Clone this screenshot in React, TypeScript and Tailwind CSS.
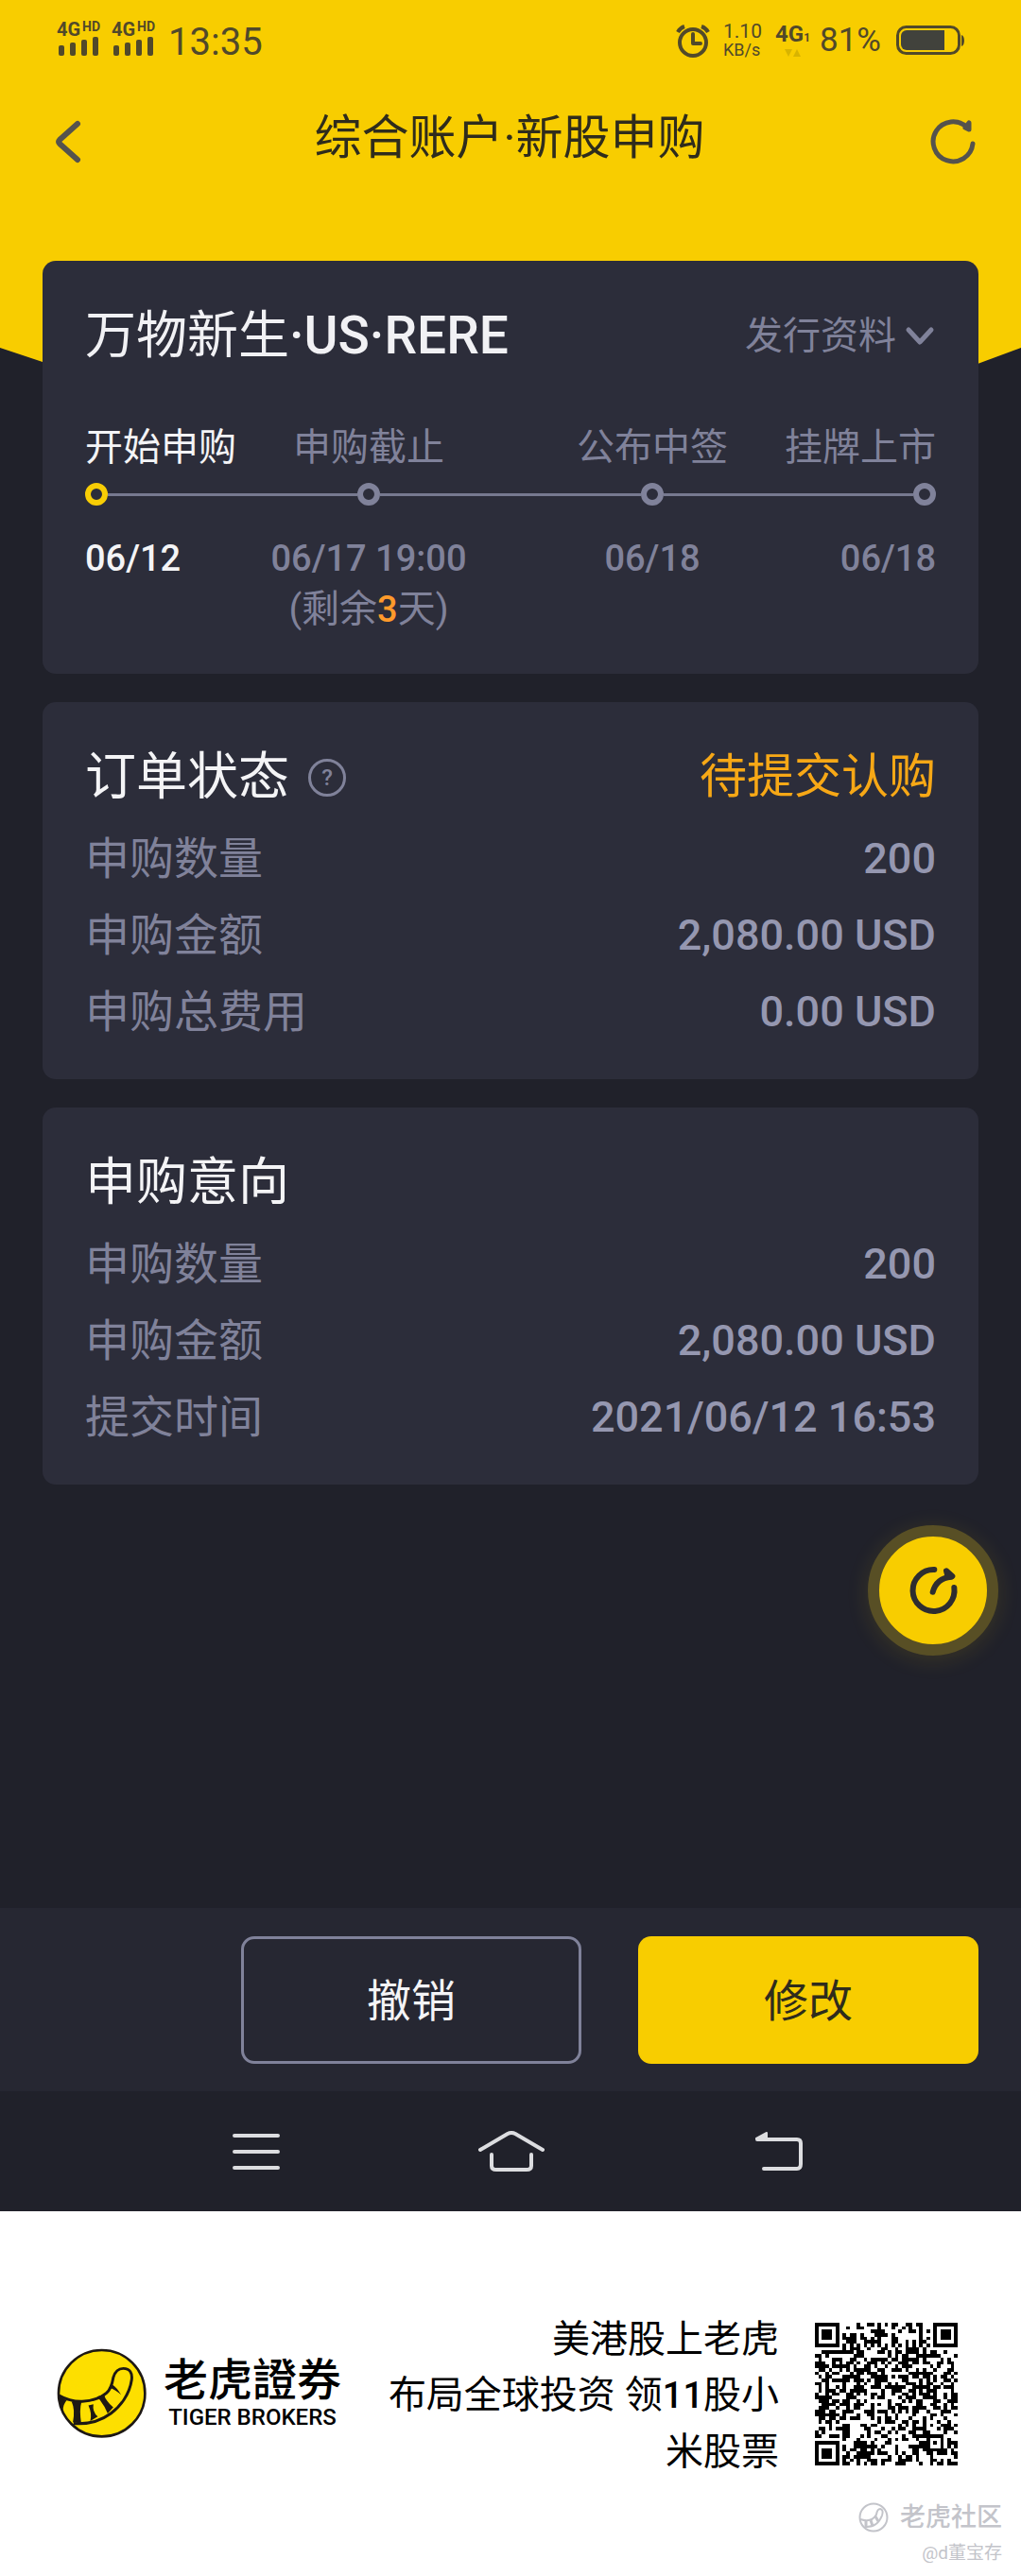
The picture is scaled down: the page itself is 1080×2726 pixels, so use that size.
import React from "react";

const QR_SIZE = 41;

function inFinder(x: number, y: number): boolean | null {
  const corners = [
    [0, 0],
    [QR_SIZE - 7, 0],
    [0, QR_SIZE - 7],
  ];
  for (const [cx, cy] of corners) {
    const dx = x - cx;
    const dy = y - cy;
    if (dx >= -1 && dx <= 7 && dy >= -1 && dy <= 7) {
      const r = Math.max(Math.abs(dx - 3), Math.abs(dy - 3));
      return r <= 1 || r === 3;
    }
  }
  const r = Math.max(Math.abs(x - 34), Math.abs(y - 34));
  if (r <= 2) return r !== 1;
  if (x === 6 || y === 6) return (x + y) % 2 === 0;
  return null;
}

function qrPath(): string {
  let seed = 20210612;
  let d = "";
  for (let y = 0; y < QR_SIZE; y++) {
    for (let x = 0; x < QR_SIZE; x++) {
      seed = (Math.imul(seed, 1664525) + 1013904223) >>> 0;
      const fixed = inFinder(x, y);
      const on = fixed === null ? seed / 4294967296 < 0.5 : fixed;
      if (on) d += `M${x} ${y}h1v1h-1z`;
    }
  }
  return d;
}

const QR_PATH = qrPath();

function Signal() {
  return (
    <div className="flex w-[46px] flex-col">
      <div className="flex items-start justify-between font-bold">
        <span className="text-[20px] leading-[16px]">4G</span>
        <span className="text-[14px] leading-[11px]">HD</span>
      </div>
      <svg className="ml-0.5" width="44" height="20" viewBox="0 0 44 20" fill="currentColor" aria-hidden="true">
        <rect x="0" y="9" width="6" height="11" rx="2" />
        <rect x="12" y="6" width="6" height="14" rx="2" />
        <rect x="24" y="3" width="6" height="17" rx="2" />
        <rect x="36" y="0" width="6" height="20" rx="2" />
      </svg>
    </div>
  );
}

function StatusBar() {
  return (
    <div className="flex h-[90px] items-center justify-between pr-[60px] pl-[60px] text-[#51492a]">
      <div className="flex items-center">
        <div className="flex gap-3 pb-2">
          <Signal />
          <Signal />
        </div>
        <span className="ml-[14px] text-[40px] leading-[48px]">13:35</span>
      </div>
      <div className="flex items-center pb-1">
        <svg width="36" height="36" viewBox="0 0 36 36" fill="none" stroke="currentColor" aria-hidden="true">
          <circle cx="18" cy="20" r="14" strokeWidth="4" />
          <path d="M18 11v10h8" strokeWidth="4" strokeLinecap="round" strokeLinejoin="round" />
          <path d="M2 9a12 12 0 0 1 7-6M34 9a12 12 0 0 0-7-6" strokeWidth="4" />
        </svg>
        <div className="ml-[14px] flex flex-col">
          <span className="text-[21px] leading-[20px]">1.10</span>
          <span className="text-[18px] leading-[20px]">KB/s</span>
        </div>
        <div className="ml-[14px] flex flex-col items-center">
          <span className="text-[24px] leading-[22px] font-bold">
            4G<span className="text-[12px]">1</span>
          </span>
          <svg width="18" height="10" viewBox="0 0 18 10" fill="#d8b400" aria-hidden="true">
            <path d="M0 1h8l-4 8zM9 9h8l-4-8z" />
          </svg>
        </div>
        <span className="ml-[10px] text-[35px] leading-[40px]">81%</span>
        <svg className="ml-4" width="72" height="32" viewBox="0 0 72 32" aria-hidden="true">
          <rect x="1.5" y="1.5" width="65" height="28" rx="9" fill="none" stroke="currentColor" strokeWidth="3" />
          <path d="M11 5h40v21H11a6 6 0 0 1-6-6v-9a6 6 0 0 1 6-6z" fill="#41423c" />
          <path d="M69 10q3 1 3 6t-3 6z" fill="currentColor" />
        </svg>
      </div>
    </div>
  );
}

function TitleBar() {
  return (
    <div className="flex h-[120px] items-center justify-between pr-[46px] pl-[56px]">
      <button type="button" aria-label="返回" className="w-[38px]">
        <svg width="32" height="48" viewBox="0 0 32 48" fill="none" stroke="#55534d" strokeWidth="6" strokeLinecap="round" strokeLinejoin="round">
          <path d="M26 5 7 22q-2 2 0 4L26 43" />
        </svg>
      </button>
      <h1 className="pb-2 text-[50px] leading-[60px] text-[#2f2c1c]">综合账户·新股申购</h1>
      <button type="button" aria-label="刷新">
        <svg width="50" height="50" viewBox="0 0 50 50" fill="none" stroke="#55534d" strokeWidth="5" strokeLinecap="round" strokeLinejoin="round">
          <path d="M45 27A21 21 0 1 1 39 10" />
          <path d="M41 5v7l-4-2z" />
        </svg>
      </button>
    </div>
  );
}

type Step = { label: string; date: string; active?: boolean; days?: number; align: string };

const STEPS: Step[] = [
  { label: "开始申购", date: "06/12", active: true, align: "items-start" },
  { label: "申购截止", date: "06/17 19:00", days: 3, align: "items-center" },
  { label: "公布中签", date: "06/18", align: "items-center" },
  { label: "挂牌上市", date: "06/18", align: "items-end" },
];

function Timeline() {
  return (
    <ol className="mt-[51px] grid grid-cols-[minmax(0,1fr)_minmax(0,2fr)_minmax(0,2fr)_minmax(0,1fr)] text-[#80829a]">
      {STEPS.map((s, i) => (
        <li key={s.label} className={`flex flex-col whitespace-nowrap ${s.align} ${s.active ? "text-[#f4f4f6]" : ""}`}>
          <span className="text-[40px] leading-[54px]">{s.label}</span>
          <div className="mt-[10px] flex w-full items-center">
            {i > 0 && <span className="h-[3px] flex-1 bg-[#77798f]" />}
            <span
              className={`size-6 rounded-full border-[6px] ${s.active ? "border-[#f8cd05]" : "border-[#80829a]"}`}
            />
            {i < STEPS.length - 1 && <span className="h-[3px] flex-1 bg-[#77798f]" />}
          </div>
          <span className="mt-[29px] text-[38px] leading-[54px] font-medium">{s.date}</span>
          {s.days && (
            <span className="text-[40px] leading-[54px]">
              (剩余<b className="text-[38px] font-medium text-[#ff9a2b]">{s.days}</b>天)
            </span>
          )}
        </li>
      ))}
    </ol>
  );
}

function Rows({ rows }: { rows: [string, string][] }) {
  return (
    <dl className="mt-[5px]">
      {rows.map(([k, v]) => (
        <div key={k} className="flex items-center justify-between leading-[81px]">
          <dt className="text-[47px] text-[#80829a]">{k}</dt>
          <dd className="text-[45px] font-medium text-[#9597b0]">{v}</dd>
        </div>
      ))}
    </dl>
  );
}

function NavBar() {
  return (
    <nav className="flex h-[127px] items-center justify-center gap-[210px] bg-[#20212a] pl-[14px]">
      <button type="button" aria-label="菜单">
        <svg width="50" height="44" viewBox="0 0 50 44" stroke="#dcdde0" strokeWidth="4" strokeLinecap="round">
          <path d="M2 5h46M2 22h46M2 39h46" />
        </svg>
      </button>
      <button type="button" aria-label="主页">
        <svg width="70" height="44" viewBox="0 0 70 44" fill="none" stroke="#dcdde0" strokeWidth="4" strokeLinecap="round" strokeLinejoin="round">
          <path d="M2 20 31 3q4-2 8 0l29 17M14 25v12q0 4 5 4h32q5 0 5-4V25" />
        </svg>
      </button>
      <button type="button" aria-label="后退" className="ml-3">
        <svg width="51" height="44" viewBox="0 0 51 44" fill="none" stroke="#dcdde0" strokeWidth="4" strokeLinecap="round" strokeLinejoin="round">
          <path d="M3 9h42q4 0 4 4v22q0 5-4 5H10" />
          <path d="M2 8 13 2v6z" fill="#dcdde0" strokeWidth="2" />
        </svg>
      </button>
    </nav>
  );
}

function TigerLogo() {
  return (
    <svg className="size-24 shrink-0" viewBox="58 132 292 292" aria-label="Tiger Brokers" role="img">
      <circle cx="203" cy="277" r="139" fill="#fddf00" stroke="#1d1814" strokeWidth="8" />
      <path
        d="M66 284Q100 304 140 303Q190 300 218 276Q234 262 240 226C246 206 256 197 272 197C294 197 302 212 299 234C292 282 262 320 232 342Q180 380 112 374"
        fill="none"
        stroke="#1d1814"
        strokeWidth="9"
      />
      <g fill="#1d1814">
        <path d="M64 284 90 300Q78 312 78 334Q66 312 64 284z" />
        <path d="M106 304H138Q130 330 137 374L110 370Q118 330 106 304z" />
        <path d="M188 288 210 280Q214 300 240 322L222 342Q210 312 188 288z" />
        <path d="M160 316 176 312Q172 336 190 352L166 366Q172 342 160 316z" />
        <path d="M226 258 236 248Q252 258 265 282Q246 264 226 258z" />
      </g>
    </svg>
  );
}

function Promo() {
  return (
    <footer className="bg-white pt-[102px] text-black">
      <div className="flex items-center justify-between pr-[67px] pl-[60px]">
        <div className="flex items-center gap-[17px]">
          <TigerLogo />
          <div className="flex flex-col items-center">
            <span className="text-[47px] leading-[50px] font-medium">老虎證券</span>
            <span className="text-[24px] leading-[28px] font-medium">TIGER BROKERS</span>
          </div>
        </div>
        <div className="flex items-center gap-[38px]">
          <p className="pt-1 text-right text-[40px] leading-[59px]">
            美港股上老虎
            <br />
            布局全球投资 领<span className="text-[38px] font-medium">11</span>股小
            <br />
            米股票
          </p>
          <svg className="size-[151px] shrink-0" viewBox="0 0 41 41" shapeRendering="crispEdges" role="img" aria-label="二维码">
            <path d={QR_PATH} />
          </svg>
        </div>
      </div>
      <div className="mt-[20px] flex flex-col items-end pr-5 pb-[10px] text-[#c3c4ca]">
        <div className="flex items-center gap-3">
          <svg width="32" height="32" viewBox="0 0 32 32" fill="none" stroke="currentColor" strokeWidth="2" aria-hidden="true">
            <circle cx="16" cy="16" r="14.500" />
            <path d="M2 18q12 4 17-5q1-6 4-6q4 1 2 7q-5 13-18 12" />
            <path d="M8 19v7M13 19l2 6M18 15l3 5" strokeWidth="3" />
          </svg>
          <span className="text-[27px] leading-[40px] font-medium">老虎社区</span>
        </div>
        <span className="text-[19px] leading-[36px]">@d董宝存</span>
      </div>
    </footer>
  );
}

const CARD = "rounded-[14px] bg-[#2c2d3a] px-[45px]";

export default function App() {
  return (
    <div className="min-h-screen bg-[#20212a] font-[Roboto,'Noto_Sans_CJK_SC',sans-serif]">
      <header className="h-[388px] bg-[#f8cd00] [clip-path:polygon(0_0,100%_0,100%_368px,calc(100%-54px)_100%,60px_100%,0_368px)]">
        <StatusBar />
        <TitleBar />
      </header>

      <main className="relative -mt-[112px] flex flex-col gap-[30px] px-[45px]">
        <section className={`${CARD} pt-[39px] pb-[41px]`}>
          <div className="flex items-center justify-between">
            <h2 className="text-[55px] leading-[80px] font-medium text-[#f1f1f4]">
              <span className="text-[54px] font-normal">万物新生</span>·US·RERE
            </h2>
            <button type="button" className="flex items-center gap-2 text-[40px] leading-[60px] text-[#80829a]">
              发行资料
              <svg width="34" height="24" viewBox="0 0 34 24" fill="none" stroke="currentColor" strokeWidth="5" strokeLinecap="round" strokeLinejoin="round" aria-hidden="true">
                <path d="m5 5 12 13L29 5" />
              </svg>
            </button>
          </div>
          <Timeline />
        </section>

        <section className={`${CARD} pt-[39px] pb-[31px]`}>
          <div className="flex items-center justify-between">
            <div className="flex items-center gap-[20px]">
              <h2 className="text-[54px] leading-[81px] text-[#f4f4f6]">订单状态</h2>
              <button
                type="button"
                aria-label="帮助"
                className="flex size-10 items-center justify-center rounded-full border-3 border-[#80829a] text-[24px] leading-none font-medium text-[#80829a]"
              >
                ?
              </button>
            </div>
            <span className="text-[50px] leading-[81px] text-[#f7a816]">待提交认购</span>
          </div>
          <Rows
            rows={[
              ["申购数量", "200"],
              ["申购金额", "2,080.00 USD"],
              ["申购总费用", "0.00 USD"],
            ]}
          />
        </section>

        <section className={`${CARD} pt-[39px] pb-[31px]`}>
          <h2 className="text-[54px] leading-[81px] text-[#f4f4f6]">申购意向</h2>
          <Rows
            rows={[
              ["申购数量", "200"],
              ["申购金额", "2,080.00 USD"],
              ["提交时间", "2021/06/12 16:53"],
            ]}
          />
        </section>
      </main>

      <div className="flex justify-end pt-[43px] pr-6 pb-[267px]">
        <button
          type="button"
          aria-label="快捷操作"
          className="flex size-[138px] items-center justify-center rounded-full border-12 border-[#584f25] bg-[#f8cd00] shadow-[0_4px_24px_rgba(248,205,0,0.12)]"
        >
          <svg width="54" height="54" viewBox="240 228 162 162" fill="none" stroke="#2e2d30" strokeWidth="18" strokeLinecap="round" strokeLinejoin="round">
            <path d="M325 243A66 66 0 1 0 388 300" />
            <path d="M320 314Q332 270 378 266" />
            <path d="M363 247 382 264 368 266z" />
          </svg>
        </button>
      </div>

      <div className="flex justify-end gap-[60px] bg-[#262732] px-[45px] pt-[30px] pb-[29px] text-[47px]">
        <button type="button" className="h-[135px] w-[360px] rounded-[14px] border-3 border-[#80829a] pt-1 text-[#f4f4f6]">
          撤销
        </button>
        <button type="button" className="h-[135px] w-[360px] rounded-[14px] bg-[#f8cd00] pt-1 text-[#2f2c1c]">
          修改
        </button>
      </div>

      <NavBar />
      <Promo />
    </div>
  );
}
